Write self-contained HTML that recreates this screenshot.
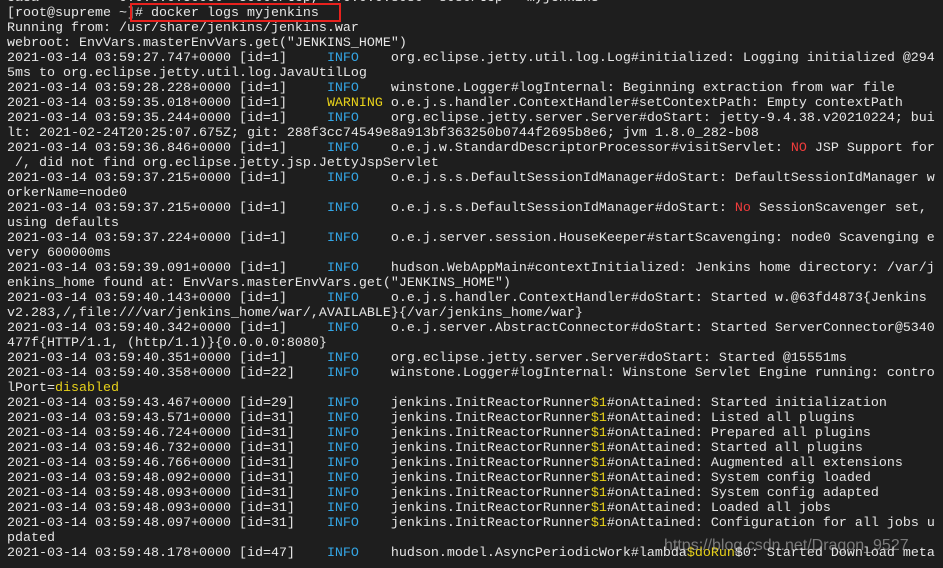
<!DOCTYPE html>
<html><head><meta charset="utf-8"><style>
html,body{margin:0;padding:0;background:#1e1e1e;width:943px;height:568px;overflow:hidden}
pre{position:absolute;left:7px;top:-9px;margin:0;font-family:"Liberation Mono",monospace;font-size:13.33px;line-height:15px;color:#e6e6e6;white-space:pre}
.i{color:#34a6e6}.w{color:#e8d21a}.y{color:#e8d21a}.r{color:#f03c3c}
.box{position:absolute;left:130px;top:3px;width:207px;height:15px;border:2px solid #e8211d}
.wm{position:absolute;left:664px;top:537px;font-family:"Liberation Sans",sans-serif;font-size:16px;color:rgba(200,200,200,0.55)}
</style></head><body>
<pre>ca8a          0.0.0.0:50000->50000/tcp, 0.0.0.0:8080->8080/tcp   myjenkins
[root@supreme ~]# docker logs myjenkins
Running from: /usr/share/jenkins/jenkins.war
webroot: EnvVars.masterEnvVars.get("JENKINS_HOME")
2021-03-14 03:59:27.747+0000 [id=1]     <span class="i">INFO</span>    org.eclipse.jetty.util.log.Log#initialized: Logging initialized @294
5ms to org.eclipse.jetty.util.log.JavaUtilLog
2021-03-14 03:59:28.228+0000 [id=1]     <span class="i">INFO</span>    winstone.Logger#logInternal: Beginning extraction from war file
2021-03-14 03:59:35.018+0000 [id=1]     <span class="w">WARNING</span> o.e.j.s.handler.ContextHandler#setContextPath: Empty contextPath
2021-03-14 03:59:35.244+0000 [id=1]     <span class="i">INFO</span>    org.eclipse.jetty.server.Server#doStart: jetty-9.4.38.v20210224; bui
lt: 2021-02-24T20:25:07.675Z; git: 288f3cc74549e8a913bf363250b0744f2695b8e6; jvm 1.8.0_282-b08
2021-03-14 03:59:36.846+0000 [id=1]     <span class="i">INFO</span>    o.e.j.w.StandardDescriptorProcessor#visitServlet: <span class="r">NO</span> JSP Support for
 /, did not find org.eclipse.jetty.jsp.JettyJspServlet
2021-03-14 03:59:37.215+0000 [id=1]     <span class="i">INFO</span>    o.e.j.s.s.DefaultSessionIdManager#doStart: DefaultSessionIdManager w
orkerName=node0
2021-03-14 03:59:37.215+0000 [id=1]     <span class="i">INFO</span>    o.e.j.s.s.DefaultSessionIdManager#doStart: <span class="r">No</span> SessionScavenger set,
using defaults
2021-03-14 03:59:37.224+0000 [id=1]     <span class="i">INFO</span>    o.e.j.server.session.HouseKeeper#startScavenging: node0 Scavenging e
very 600000ms
2021-03-14 03:59:39.091+0000 [id=1]     <span class="i">INFO</span>    hudson.WebAppMain#contextInitialized: Jenkins home directory: /var/j
enkins_home found at: EnvVars.masterEnvVars.get("JENKINS_HOME")
2021-03-14 03:59:40.143+0000 [id=1]     <span class="i">INFO</span>    o.e.j.s.handler.ContextHandler#doStart: Started w.@63fd4873{Jenkins
v2.283,/,file:///var/jenkins_home/war/,AVAILABLE}{/var/jenkins_home/war}
2021-03-14 03:59:40.342+0000 [id=1]     <span class="i">INFO</span>    o.e.j.server.AbstractConnector#doStart: Started ServerConnector@5340
477f{HTTP/1.1, (http/1.1)}{0.0.0.0:8080}
2021-03-14 03:59:40.351+0000 [id=1]     <span class="i">INFO</span>    org.eclipse.jetty.server.Server#doStart: Started @15551ms
2021-03-14 03:59:40.358+0000 [id=22]    <span class="i">INFO</span>    winstone.Logger#logInternal: Winstone Servlet Engine running: contro
lPort=<span class="y">disabled</span>
2021-03-14 03:59:43.467+0000 [id=29]    <span class="i">INFO</span>    jenkins.InitReactorRunner<span class="y">$1</span>#onAttained: Started initialization
2021-03-14 03:59:43.571+0000 [id=31]    <span class="i">INFO</span>    jenkins.InitReactorRunner<span class="y">$1</span>#onAttained: Listed all plugins
2021-03-14 03:59:46.724+0000 [id=31]    <span class="i">INFO</span>    jenkins.InitReactorRunner<span class="y">$1</span>#onAttained: Prepared all plugins
2021-03-14 03:59:46.732+0000 [id=31]    <span class="i">INFO</span>    jenkins.InitReactorRunner<span class="y">$1</span>#onAttained: Started all plugins
2021-03-14 03:59:46.766+0000 [id=31]    <span class="i">INFO</span>    jenkins.InitReactorRunner<span class="y">$1</span>#onAttained: Augmented all extensions
2021-03-14 03:59:48.092+0000 [id=31]    <span class="i">INFO</span>    jenkins.InitReactorRunner<span class="y">$1</span>#onAttained: System config loaded
2021-03-14 03:59:48.093+0000 [id=31]    <span class="i">INFO</span>    jenkins.InitReactorRunner<span class="y">$1</span>#onAttained: System config adapted
2021-03-14 03:59:48.093+0000 [id=31]    <span class="i">INFO</span>    jenkins.InitReactorRunner<span class="y">$1</span>#onAttained: Loaded all jobs
2021-03-14 03:59:48.097+0000 [id=31]    <span class="i">INFO</span>    jenkins.InitReactorRunner<span class="y">$1</span>#onAttained: Configuration for all jobs u
pdated
2021-03-14 03:59:48.178+0000 [id=47]    <span class="i">INFO</span>    hudson.model.AsyncPeriodicWork#lambda<span class="y">$doRun</span>$0: Started Download meta</pre>
<div class="box"></div>
<div class="wm">https://blog.csdn.net/Dragon_9527</div>
</body></html>
